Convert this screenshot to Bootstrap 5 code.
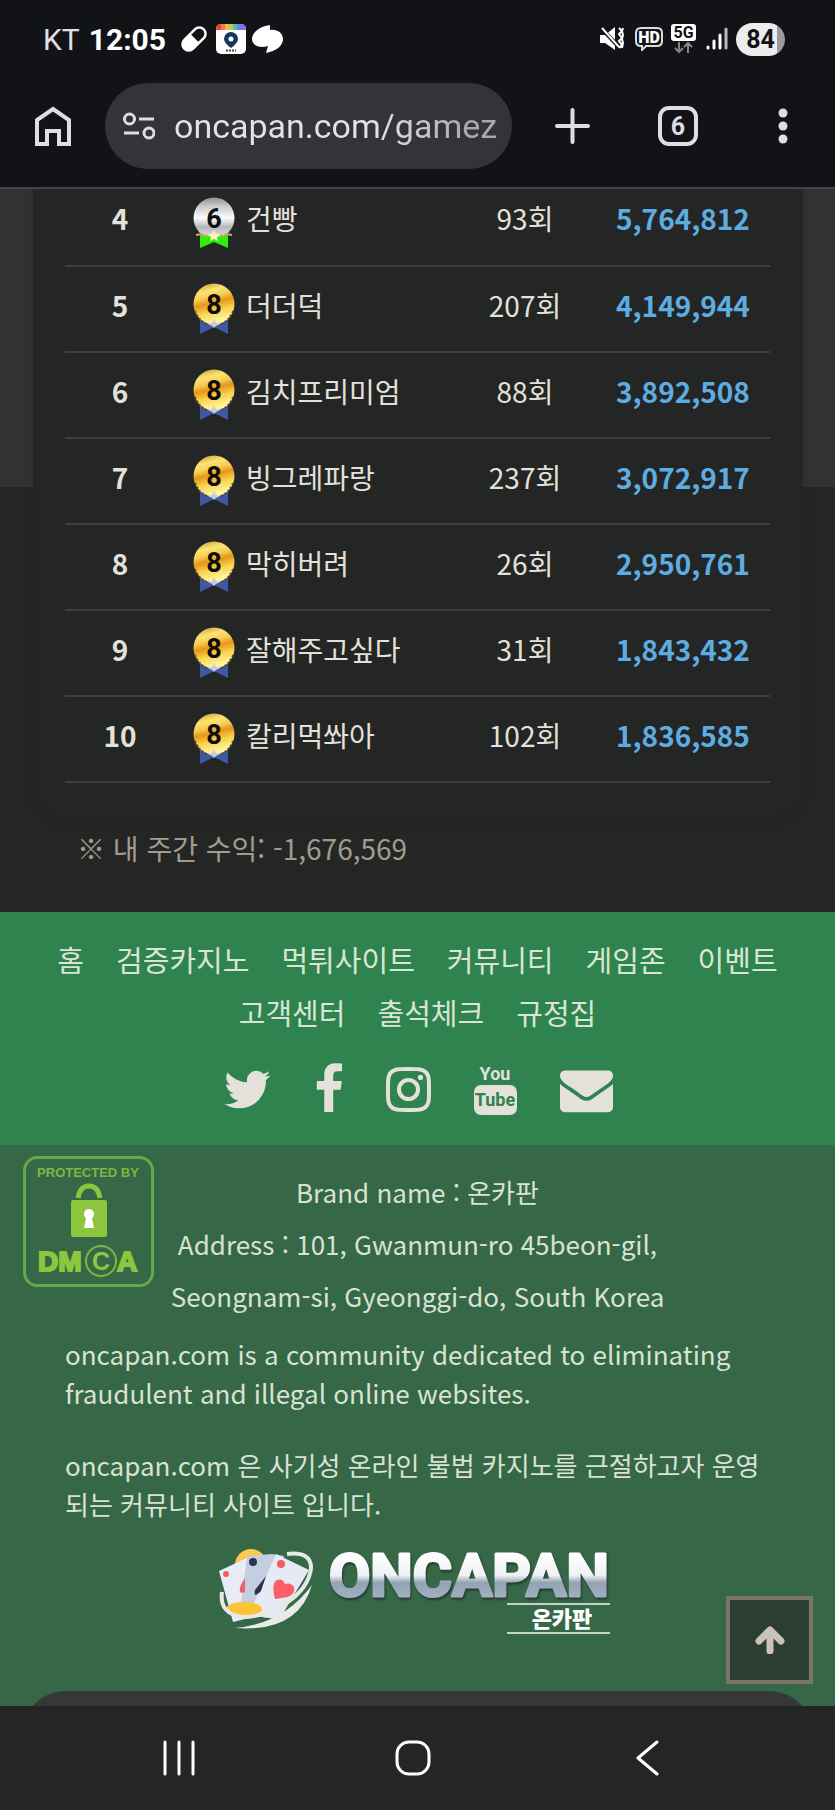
<!DOCTYPE html>
<html lang="ko">
<head>
<meta charset="utf-8">
<meta name="viewport" content="width=device-width, initial-scale=1">
<title>oncapan.com</title>
<link href="https://cdn.jsdelivr.net/npm/bootstrap@5.3.0/dist/css/bootstrap.min.css" rel="stylesheet">
<style>
  body { background: #242625; color: #e4e0da; font-family: "Noto Sans CJK KR", sans-serif; font-size: 28px; line-height: 39px; }
  svg { display: block; flex: none; }
  .btn { --bs-btn-padding-x: 0; --bs-btn-padding-y: 0; --bs-btn-border-width: 0; }

  /* phone and browser bars */
  .browser-top { background: #121317; border-bottom: 2px solid #44454a; font-family: Roboto, sans-serif; }
  .status-bar { height: 83px; padding: 0 50px 5px 43px; color: #fff; font-size: 30px; }
  .carrier { color: #e0e0e4; font-weight: 400; }
  .clock { font-weight: 700; margin-left: 9px; margin-right: 14px; }
  .battery { width: 49px; height: 33px; border-radius: 17px; background: linear-gradient(90deg, #ececec 41px, #9a9a9c 41px); color: #121317; font-size: 25px; line-height: 33px; font-weight: 700; }
  .toolbar { padding-bottom: 18px; }
  .tool-btn { flex: none; width: 105px; height: 86px; }
  .address-pill { min-width: 0; height: 86px; border-radius: 43px; background: #333438; padding: 0 16px 0 18px; gap: 19px; }
  .address-pill input { border: 0; outline: 0; padding: 0; min-width: 0; width: 0; font-size: 34px; height: 50px;
    color: transparent; background: linear-gradient(90deg, #e3e2e8 205px, #a8a9b0 290px); -webkit-background-clip: text; background-clip: text; }

  /* ranking */
  .ranking { background: linear-gradient(#313332 298px, transparent 298px); padding-bottom: 44px; }
  .rank-card { margin: 0 32px 0 33px; padding: 0 33px 34px 32px; background: #242625; border-radius: 0 0 33px 33px; box-shadow: 0 2px 12px rgba(0,0,0,.1); overflow: hidden; }
  .rank-table { --bs-table-bg: transparent; --bs-table-color: #e4e0da; color: #e4e0da; border-color: #404241; table-layout: fixed; margin-top: -9px; }
  .rank-table > tbody > tr { height: 86px; }
  .rank-table > tbody > tr > * { padding: 0 0 8px; vertical-align: middle; text-align: center; border-bottom: 2px solid #3d3f3e; color: inherit; }
  .rank-table > tbody > tr > .member { padding: 0 0 0 18px; text-align: left; }
  .member-name { padding-bottom: 8px; margin-left: 11px; }
  .rank-table > tbody > tr > .amount { color: #5dade2; font-weight: 700; }
  .my-profit { color: #a39b8e; margin: 12px 0 0 77px; }

  /* footer */
  .menu-band { background: #2e834f; padding: 21px 40px 29px; }
  .menu-band ul { column-gap: 32px; }
  .menu-band a { color: #dae5d4; text-decoration: none; font-size: 29px; line-height: 53px; display: block; }
  .menu-band .social { column-gap: 42px; padding-top: 24px; }
  .menu-band .social a { color: #e4e0da; }
  .info-band { background: #366848; color: #d9e2d3; height: 561px; overflow: hidden; padding: 21px 65px 0; font-size: 26px; }
  .info-band address { line-height: 52px; text-align: center; margin: 0; }
  .about { margin-top: 12px; }
  .about p { margin-bottom: 33px; }
  .about p:last-child { margin-bottom: 23px; }
  .dmca { position: absolute; left: 22px; top: 10px; }
  .to-top { position: absolute; right: 22px; bottom: 22px; width: 87px; height: 88px; border: 4px solid #7b7566; background: #2c3e33; border-radius: 0; }
  .sheet-edge { position: absolute; left: 22px; right: 22px; bottom: 0; height: 15px; overflow: hidden; }
  .sheet-edge::before { content: ""; display: block; height: 90px; border-radius: 44px; background: #363837; }

  .system-nav { background: #242625; height: 104px; padding: 0 71px 0 62px; }
  .system-nav .btn { height: 104px; }
</style>
</head>
<body>

<svg width="0" height="0" class="position-absolute" aria-hidden="true">
  <defs>
    <linearGradient id="gold" x1="0" y1="0" x2=".25" y2="1">
      <stop offset="0" stop-color="#c88a2c"/><stop offset=".25" stop-color="#fbe470"/><stop offset=".4" stop-color="#f7cf55"/>
      <stop offset=".55" stop-color="#e6951a"/><stop offset=".75" stop-color="#f8d24c"/><stop offset="1" stop-color="#fff6a0"/>
    </linearGradient>
    <linearGradient id="silver" x1="0" y1="0" x2="0" y2="1">
      <stop offset="0" stop-color="#8e9092"/><stop offset=".2" stop-color="#c5c7c9"/><stop offset=".5" stop-color="#fbfbfb"/>
      <stop offset=".72" stop-color="#b4b6b9"/><stop offset="1" stop-color="#e8e8e8"/>
    </linearGradient>
    <linearGradient id="steel" x1="0" y1="0" x2="0" y2="1">
      <stop offset=".2" stop-color="#fff"/><stop offset=".5" stop-color="#eef1f4"/><stop offset=".6" stop-color="#93a3b3"/><stop offset=".9" stop-color="#a8b6c5"/>
    </linearGradient>
    <symbol id="medal-gold" viewBox="0 0 42 52">
      <path d="M7 36h28v15l-14-7-14 7z" fill="#3f58a6"/>
      <circle cx="21" cy="21" r="20.500" fill="url(#gold)"/>
      <path d="M2 28q4 10 12 13M40 28q-4 10-12 13" fill="none" stroke="#5a4a1c" stroke-width="2" stroke-dasharray="2 2"/>
      <path d="M21 36l2 4 4 1-4 2-2 2-2-2-4-2 4-1z" fill="#c9cbd8"/>
      <text x="21" y="31" text-anchor="middle" font-family="Roboto, sans-serif" font-weight="700" font-size="27" fill="#0c0c08">8</text>
    </symbol>
    <symbol id="medal-silver" viewBox="0 0 42 52">
      <circle cx="21" cy="21" r="20.500" fill="url(#silver)"/>
      <path d="M7 38h28v13l-14-6-14 6z" fill="#2fee0c"/>
      <path d="M3 38l6-1 3 2 3-1M39 38l-6-1-3 2-3-1" stroke="#d8a567" stroke-width="2" fill="none"/>
      <path d="M21 33l2 4 5 1-4 2 1 4-4-2-4 2 1-4-4-2 5-1z" fill="#fdf6b4"/>
      <text x="21" y="31" text-anchor="middle" font-family="Roboto, sans-serif" font-weight="700" font-size="27" fill="#111">6</text>
    </symbol>
  </defs>
</svg>

<header class="browser-top">
  <div class="status-bar d-flex align-items-center">
    <span class="carrier">KT</span><span class="clock">12:05</span>
    <svg width="28" height="28" viewBox="0 0 28 28"><g transform="rotate(-45 14 14)"><rect x="-1" y="6.500" width="30" height="15" rx="7.500" fill="#fff"/><path d="M15 9h6.500a5 5 0 0 1 0 10H15z" fill="#121317"/></g></svg>
    <svg class="ms-2" width="30" height="30" viewBox="0 0 30 30">
      <rect width="30" height="30" rx="5" fill="#fdfdfd"/><path d="M0 6V5a5 5 0 0 1 5-5h2v6z" fill="#e8453c"/><path d="M5 0h4v6H5z" fill="#f0784a"/><path d="M9 0h4v6H9z" fill="#f5b84c"/><path d="M13 0h4v6h-4z" fill="#b5cf55"/><path d="M17 0h4v6h-4z" fill="#55bfa8"/><path d="M21 0h4v6h-4z" fill="#5b8def"/><path d="M24 0h1a5 5 0 0 1 5 5v1h-6z" fill="#8b6be0"/>
      <path d="M15 24q-7-5-7-9a7 7 0 0 1 14 0q0 4-7 9z" fill="#16365a"/><circle cx="15" cy="15" r="2.500" fill="#fff"/><path d="M10 26.500h10" stroke="#444" stroke-width="2" stroke-dasharray="2 1"/>
    </svg>
    <svg style="margin-left:6px" width="31" height="28" viewBox="0 0 31 28"><path d="M18 0v5c7-1 13 3 13 9 0 7-7 12-17 14l2-7C7 24 0 20 0 14 0 7 9 1 18 0z" fill="#fff"/></svg>
    <div class="d-flex align-items-center ms-auto">
      <svg width="24" height="24" viewBox="0 0 24 24"><path d="M0 8h5l10-8v23L5 16H0z" fill="#fff"/><path d="M1 1l18 19" stroke="#121317" stroke-width="4"/><path d="M2 1l17 19" stroke="#fff" stroke-width="2"/><path d="M19 1l3 3-3 3 3 4-3 3 3 4-3 3M23 1l-1 3 1 4-1 4 1 4-1 5" fill="none" stroke="#fff" stroke-width="2"/></svg>
      <svg style="margin-left:11px" width="28" height="24" viewBox="0 0 28 24"><path d="M6 1h16q5 0 5 5v8q0 5-5 5H11l-4 4v-4H6q-5 0-5-5V6q0-5 5-5z" fill="none" stroke="#dcdce0" stroke-width="2"/><text x="14" y="16" text-anchor="middle" font-size="16" font-weight="900" fill="#fff">HD</text></svg>
      <svg class="ms-2" width="25" height="30" viewBox="0 0 25 30"><rect width="25" height="17" rx="3" fill="#fff"/><text x="12.500" y="14" text-anchor="middle" font-size="16" font-weight="700" fill="#121317">5G</text><path d="M8 18v9M4 24l4 4 4-4M17 29v-9M13 23l4-4 4 4" fill="none" stroke="#85858a" stroke-width="2"/></svg>
      <svg style="margin-left:10px" width="22" height="24" viewBox="0 0 22 24" stroke="#fff" stroke-width="3" stroke-linecap="round"><path d="M2 20v1M8 14v7M14 8v13"/><path d="M20 2v19" stroke="#b8b8bc"/></svg>
      <div class="battery text-center ms-2">84</div>
    </div>
  </div>
  <div class="toolbar d-flex align-items-center">
    <button class="btn tool-btn d-flex align-items-center justify-content-center" aria-label="Home">
      <svg width="36" height="40" viewBox="0 0 36 40"><path d="M2 38V14L18 3l16 11v24H24V25H12v13z" fill="none" stroke="#dedde6" stroke-width="4"/></svg>
    </button>
    <div class="address-pill d-flex align-items-center flex-grow-1">
      <svg width="32" height="28" viewBox="0 0 32 28" fill="none" stroke="#dedde6" stroke-width="3"><circle cx="6.500" cy="7" r="5"/><path d="M16 7h15M1 21h15"/><circle cx="26" cy="21" r="5"/></svg>
      <input class="flex-grow-1" type="text" value="oncapan.com/gamez" aria-label="Address">
    </div>
    <button class="btn tool-btn d-flex align-items-center justify-content-center ms-2" aria-label="New tab">
      <svg width="35" height="36" viewBox="0 0 35 36"><path d="M17.500 2v32M2 18h31" stroke="#dedde6" stroke-width="4" stroke-linecap="round"/></svg>
    </button>
    <button class="btn tool-btn d-flex align-items-center justify-content-center" aria-label="Tabs">
      <svg width="40" height="40" viewBox="0 0 40 40"><rect x="2" y="2" width="36" height="36" rx="9" fill="none" stroke="#dedde6" stroke-width="4"/><text x="20" y="29" text-anchor="middle" font-size="25" font-weight="700" fill="#dedde6">6</text></svg>
    </button>
    <button class="btn tool-btn d-flex align-items-center justify-content-center" aria-label="Menu">
      <svg width="10" height="36" viewBox="0 0 10 36" fill="#dedde6"><circle cx="5" cy="5" r="4.500"/><circle cx="5" cy="18" r="4.500"/><circle cx="5" cy="31" r="4.500"/></svg>
    </button>
  </div>
</header>

<main class="ranking">
  <div class="rank-card">
    <table class="table rank-table mb-0">
      <colgroup><col style="width:15.6%"><col style="width:39.6%"><col style="width:20.1%"><col style="width:24.7%"></colgroup>
      <tbody>
        <tr><th scope="row">4</th><td class="member"><div class="d-flex align-items-center"><svg width="42" height="52"><use href="#medal-silver"/></svg><span class="member-name">건빵</span></div></td><td>93회</td><td class="amount">5,764,812</td></tr>
        <tr><th scope="row">5</th><td class="member"><div class="d-flex align-items-center"><svg width="42" height="52"><use href="#medal-gold"/></svg><span class="member-name">더더덕</span></div></td><td>207회</td><td class="amount">4,149,944</td></tr>
        <tr><th scope="row">6</th><td class="member"><div class="d-flex align-items-center"><svg width="42" height="52"><use href="#medal-gold"/></svg><span class="member-name">김치프리미엄</span></div></td><td>88회</td><td class="amount">3,892,508</td></tr>
        <tr><th scope="row">7</th><td class="member"><div class="d-flex align-items-center"><svg width="42" height="52"><use href="#medal-gold"/></svg><span class="member-name">빙그레파랑</span></div></td><td>237회</td><td class="amount">3,072,917</td></tr>
        <tr><th scope="row">8</th><td class="member"><div class="d-flex align-items-center"><svg width="42" height="52"><use href="#medal-gold"/></svg><span class="member-name">막히버려</span></div></td><td>26회</td><td class="amount">2,950,761</td></tr>
        <tr><th scope="row">9</th><td class="member"><div class="d-flex align-items-center"><svg width="42" height="52"><use href="#medal-gold"/></svg><span class="member-name">잘해주고싶다</span></div></td><td>31회</td><td class="amount">1,843,432</td></tr>
        <tr><th scope="row">10</th><td class="member"><div class="d-flex align-items-center"><svg width="42" height="52"><use href="#medal-gold"/></svg><span class="member-name">칼리먹쏴아</span></div></td><td>102회</td><td class="amount">1,836,585</td></tr>
      </tbody>
    </table>
  </div>
  <p class="my-profit">※ 내 주간 수익: -1,676,569</p>
</main>

<footer>
  <nav class="menu-band">
    <ul class="list-unstyled d-flex flex-wrap justify-content-center mb-0">
      <li><a href="#">홈</a></li><li><a href="#">검증카지노</a></li><li><a href="#">먹튀사이트</a></li><li><a href="#">커뮤니티</a></li><li><a href="#">게임존</a></li><li><a href="#">이벤트</a></li><li><a href="#">고객센터</a></li><li><a href="#">출석체크</a></li><li><a href="#">규정집</a></li>
    </ul>
    <div class="social d-flex justify-content-center">
      <a href="#" aria-label="Twitter"><svg width="49" height="53" viewBox="64 0 1664 1792" fill="currentColor"><path d="M1684 408q-67 98-162 167 1 14 1 42 0 130-38 259.500t-115.500 248.500-184.500 210.500-258 146-323 54.500q-271 0-496-145 35 4 78 4 225 0 401-138-105-2-188-64.500t-114-159.500q33 5 61 5 43 0 85-11-112-23-185.500-111.500t-73.500-205.500v-4q68 38 146 41-66-44-105-115t-39-154q0-88 44-163 121 149 294.500 238.500t371.500 99.500q-8-38-8-74 0-134 94.500-228.500t228.500-94.500q140 0 236 102 109-21 205-78-37 115-142 178 93-10 186-50z"/></svg></a>
      <a href="#" aria-label="Facebook"><svg width="30" height="53" viewBox="384 0 1024 1792" fill="currentColor"><path d="M1343 12v264h-157q-86 0-116 36t-30 108v189h293l-39 296h-254v759h-306v-759h-255v-296h255v-218q0-186 104-288.500t277-102.500q147 0 228 12z"/></svg></a>
      <a href="#" aria-label="Instagram"><svg width="45" height="53" viewBox="128 0 1536 1792" fill="currentColor"><path d="M1152 896q0-106-75-181t-181-75-181 75-75 181 75 181 181 75 181-75 75-181zm138 0q0 164-115 279t-279 115-279-115-115-279 115-279 279-115 279 115 115 279zm108-410q0 38-27 65t-65 27-65-27-27-65 27-65 65-27 65 27 27 65zm-502-220q-7 0-76.500-.5t-105.500 0-96.500 3-103 10-71.500 18.500q-50 20-88 58t-58 88q-11 29-18.500 71.500t-10 103-3 96.500 0 105.500.5 76.500-.5 76.500 0 105.500 3 96.500 10 103 18.500 71.500q20 50 58 88t88 58q29 11 71.500 18.500t103 10 96.500 3 105.500 0 76.500-.5 76.500.5 105.500 0 96.500-3 103-10 71.500-18.500q50-20 88-58t58-88q11-29 18.500-71.500t10-103 3-96.500 0-105.500-.5-76.500.5-76.500 0-105.500-3-96.500-10-103-18.500-71.500q-20-50-58-88t-88-58q-29-11-71.500-18.500t-103-10-96.500-3-105.500 0-76.500.5zm768 630q0 229-5 317-10 208-124 322t-322 124q-88 5-317 5t-317-5q-208-10-322-124t-124-322q-5-88-5-317t5-317q10-208 124-322t322-124q88-5 317-5t317 5q208 10 322 124t124 322q5 88 5 317z"/></svg></a>
      <a href="#" aria-label="YouTube"><svg width="45" height="53" viewBox="0 0 45 53" font-family="Roboto, sans-serif" font-weight="700" text-anchor="middle"><text x="22" y="17" font-size="18" fill="#e4e0da">You</text><rect x="1" y="22" width="43" height="30" rx="7" fill="#e4e0da"/><text x="22" y="43" font-size="18" fill="#2e834f">Tube</text></svg></a>
      <a href="#" aria-label="Email"><svg width="53" height="53" viewBox="0 0 1792 1792" fill="currentColor"><path d="M1792 710v794q0 66-47 113t-113 47h-1472q-66 0-113-47t-47-113v-794q44 49 101 87 362 246 497 345 57 42 92.500 65.500t94.500 48 110 24.500h2q51 0 110-24.500t94.500-48 92.500-65.500q170-123 498-345 57-39 100-87zm0-294q0 79-49 151t-122 123q-376 261-468 325-10 7-42.500 31t-54 38.500-52 32.500-57.500 27-50 9h-2q-23 0-50-9t-57.500-27-52-32.500-54-38.500-42.500-31q-91-64-262-182.500t-205-142.500q-62-42-117-115.500t-55-136.500q0-78 41.500-130t118.500-52h1472q65 0 112.500 47t47.500 113z"/></svg></a>
    </div>
  </nav>

  <section class="info-band position-relative">
    <a href="#" class="dmca" aria-label="DMCA protection status">
      <svg width="133" height="133" viewBox="0 0 133 133" font-family="Liberation Sans, sans-serif" font-weight="700" fill="#8cc63f">
        <rect x="2.500" y="2.500" width="128" height="128" rx="13" fill="none" stroke="#68a845" stroke-width="3"/>
        <text x="66" y="22" text-anchor="middle" font-size="13" fill="#7bb843">PROTECTED BY</text>
        <path d="M56 43q2-12 11-12t11 12" fill="none" stroke="#8cc63f" stroke-width="5"/>
        <rect x="49" y="45" width="36" height="37" rx="2"/>
        <path d="M67 54a5 5 0 0 1 3 9l2 10H62l2-10a5 5 0 0 1 3-9z" fill="#fff"/>
        <text x="16" y="116" font-size="28" stroke="#8cc63f" stroke-width="2">DM</text>
        <circle cx="79" cy="106" r="15" fill="none" stroke="#7bb843" stroke-width="2"/>
        <text x="79" y="115" text-anchor="middle" font-size="25">C</text>
        <text x="95" y="116" font-size="28" stroke="#8cc63f" stroke-width="2">A</text>
      </svg>
    </a>
    <address>
      <div>Brand name : 온카판</div>
      <div>Address : 101, Gwanmun-ro 45beon-gil,</div>
      <div>Seongnam-si, Gyeonggi-do, South Korea</div>
    </address>
    <div class="about">
      <p>oncapan.com is a community dedicated to eliminating fraudulent and illegal online websites.</p>
      <p>oncapan.com 은 사기성 온라인 불법 카지노를 근절하고자 운영되는 커뮤니티 사이트 입니다.</p>
    </div>
    <a href="#" class="d-flex justify-content-center" aria-label="ONCAPAN 온카판">
      <svg width="398" height="92" viewBox="0 0 398 92">
        <circle cx="32" cy="19" r="16" fill="#fcc94e"/>
        <path d="M0 25l32-15 14 58-32 8z" fill="#e9ebf7"/>
        <path d="M28 10l25-2 12 2-18 62-26-7z" fill="#c5cde0"/>
        <path d="M57 8l33 16-30 50-30-6z" fill="#e6e9f6"/>
        <circle cx="7" cy="28" r="3" fill="#f55a61"/><circle cx="34" cy="16" r="4" fill="#2c3250"/><circle cx="62" cy="18" r="4" fill="#f55a61"/>
        <path d="M26 32q-8 11-4 15l4-1z" fill="#f0616c"/><path d="M47 30L36 44q-2 9 6 1z" fill="#2c3250"/>
        <path d="M56 53q-4-16 2-19 6-2 8 4 6-2 9 3 2 6-6 10z" fill="#fb5f66"/>
        <ellipse cx="25" cy="63" rx="18" ry="7" fill="#fcc335"/>
        <path d="M68 8q24-3 24 14c-3 28-40 49-68 49Q0 68 3 46" fill="none" stroke="#e7e9e7" stroke-width="4"/>
        <path d="M93 39Q79 87 16 82q48-4 77-43z" fill="#e9ebe9"/>
        <text x="110" y="50" font-family="Roboto, sans-serif" font-size="60" font-weight="700" fill="url(#steel)" stroke="url(#steel)" stroke-width="3" stroke-linejoin="round" style="filter:drop-shadow(1px 2px 1px #23392f)">ONCAPAN</text>
        <path d="M288 58h103M288 87h103" stroke="#c4d2c9" stroke-width="2"/>
        <text x="343" y="81" text-anchor="middle" font-family="Noto Sans CJK KR, sans-serif" font-size="22" font-weight="900" fill="#fff">온카판</text>
      </svg>
    </a>
    <button class="btn to-top d-flex align-items-center justify-content-center" aria-label="Back to top">
      <svg width="30" height="28" viewBox="0 0 30 28"><path d="M15 25V5M4 15L15 4l11 11" fill="none" stroke="#c9c3b8" stroke-width="7" stroke-linecap="round" stroke-linejoin="round"/></svg>
    </button>
    <div class="sheet-edge"></div>
  </section>
</footer>

<nav class="system-nav d-flex" aria-label="System">
  <button class="btn col d-flex align-items-center justify-content-center" aria-label="Recents"><svg width="32" height="36" viewBox="0 0 32 36" stroke="#fff" stroke-width="3" stroke-linecap="round"><path d="M2 2v32M16 2v32M30 2v32"/></svg></button>
  <button class="btn col d-flex align-items-center justify-content-center" aria-label="Home"><svg width="36" height="36" viewBox="0 0 36 36"><rect x="2" y="2" width="32" height="32" rx="12" fill="none" stroke="#fff" stroke-width="3"/></svg></button>
  <button class="btn col d-flex align-items-center justify-content-center" aria-label="Back"><svg width="24" height="36" viewBox="0 0 24 36"><path d="M22 2L3 18l19 16" fill="none" stroke="#fff" stroke-width="3" stroke-linecap="round" stroke-linejoin="round"/></svg></button>
</nav>

<script src="https://cdn.jsdelivr.net/npm/bootstrap@5.3.0/dist/js/bootstrap.bundle.min.js"></script>
</body>
</html>
